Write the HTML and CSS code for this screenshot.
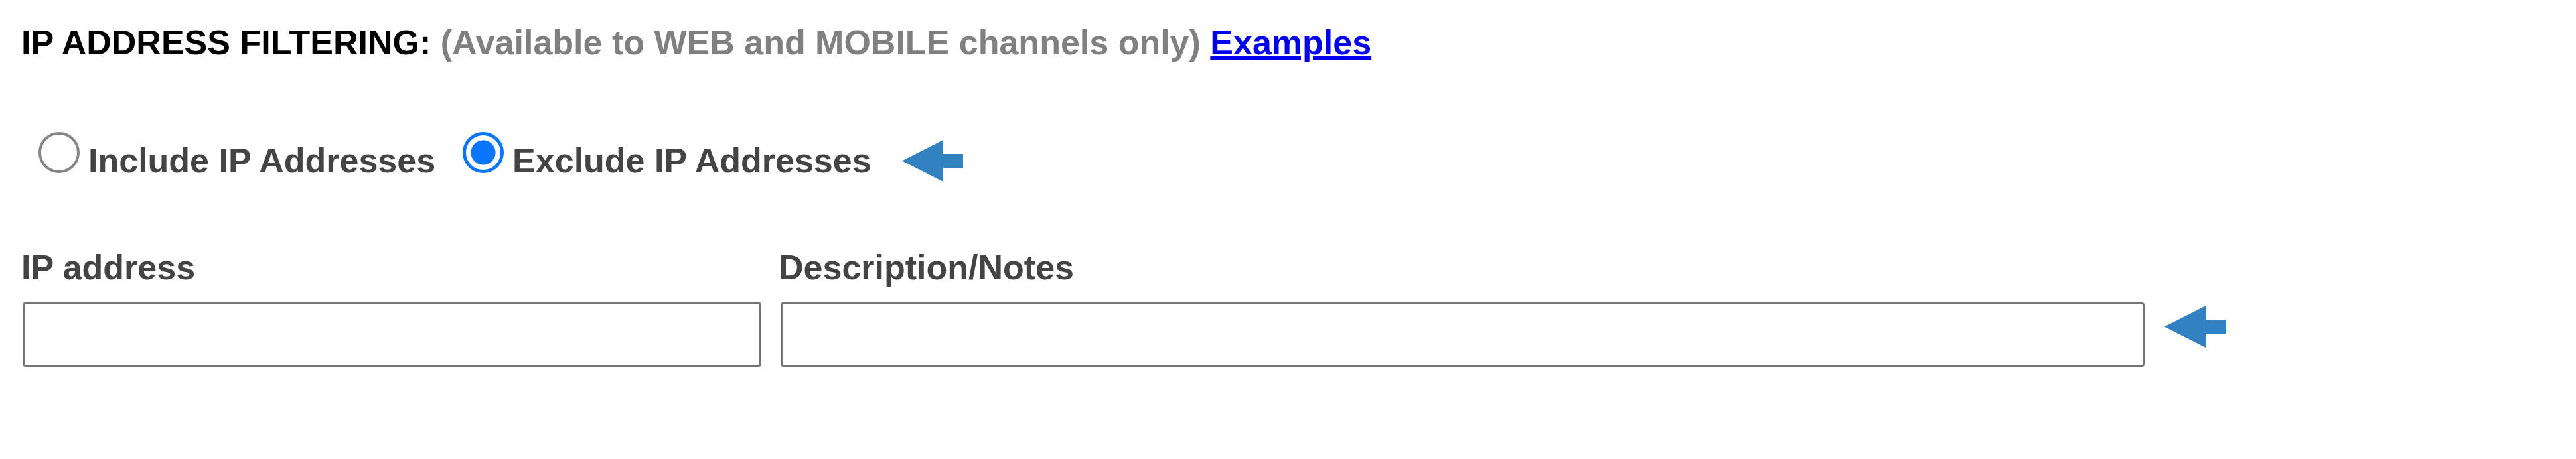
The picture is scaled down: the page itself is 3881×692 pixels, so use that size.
FILE: index.html
```html
<!DOCTYPE html>
<html lang="en">
<head>
<meta charset="utf-8">
<title>IP Address Filtering</title>
<link rel="stylesheet" href="styles.css">
</head>
<body>
<div class="page">
  <p class="title">IP ADDRESS FILTERING: <span class="muted">(Available to WEB and MOBILE channels only)</span> <a class="link" href="#">Examples</a></p>

  <div class="radios">
    <label class="opt opt-include"><input class="radio" type="radio" name="mode"><span class="opt-text">Include IP Addresses</span></label>
    <label class="opt opt-exclude"><input class="radio" type="radio" name="mode" checked><span class="opt-text">Exclude IP Addresses</span></label>
    <svg class="arrow arrow-radio" width="92" height="63" viewBox="0 0 92 63" aria-hidden="true"><polygon points="0,31.5 62,0 62,21 92,21 92,42 62,42 62,63" fill="#3181c3"/></svg>
  </div>

  <div class="fields">
    <div class="field field-ip">
      <label class="field-label" for="ip">IP address</label>
      <input class="text-input input-ip" id="ip" type="text">
    </div>
    <div class="field field-desc">
      <label class="field-label" for="desc">Description/Notes</label>
      <input class="text-input input-desc" id="desc" type="text">
    </div>
    <svg class="arrow arrow-field" width="92" height="63" viewBox="0 0 92 63" aria-hidden="true"><polygon points="0,31.5 62,0 62,21 92,21 92,42 62,42 62,63" fill="#3181c3"/></svg>
  </div>
</div>
</body>
</html>
```

FILE: styles.css
```css
html, body {
  margin: 0;
  padding: 0;
  background: #ffffff;
}

.page {
  padding: 34px 0 0 32px;
  font-family: "Liberation Sans", Arial, sans-serif;
  font-weight: bold;
  font-size: 52px;
  line-height: 60px;
}

.title {
  margin: 0;
  color: #000000;
  white-space: nowrap;
}

.muted {
  color: #808080;
}

.link {
  color: #0000ee;
  text-decoration: underline;
}

.radios {
  display: flex;
  align-items: flex-start;
  margin-top: 105px;
  color: #444444;
}

.opt {
  display: flex;
  align-items: flex-start;
  white-space: nowrap;
}

.opt-include {
  margin-left: 26px;
}

.opt-exclude {
  margin-left: 41px;
}

.radio {
  appearance: none;
  -webkit-appearance: none;
  box-sizing: border-box;
  width: 62px;
  height: 62px;
  margin: 0 13px 0 0;
  border: 4px solid #858585;
  border-radius: 50%;
  background: #ffffff;
}

.radio:checked {
  border: 5px solid #0a75ff;
  background: radial-gradient(circle, #0a75ff 0 18px, #ffffff 19px);
}

.opt-text {
  margin-top: 13px;
}

.arrow {
  display: block;
  flex: none;
}

.arrow-radio {
  margin: 12px 0 0 46px;
}

.fields {
  display: flex;
  align-items: flex-start;
  gap: 26px;
  margin-top: 99px;
  color: #444444;
}

.field {
  display: flex;
  flex-direction: column;
  align-items: flex-start;
}

.field-label {
  white-space: nowrap;
}

.text-input {
  box-sizing: border-box;
  height: 97px;
  margin-top: 23px;
  border: 3px solid #737373;
  border-radius: 4px;
  background: #ffffff;
  padding: 0 8px;
  font: inherit;
  outline: none;
}

.input-ip {
  width: 1113px;
  margin-left: 2px;
}

.input-desc {
  width: 2055px;
  margin-left: 3px;
}

.arrow-field {
  margin: 88px 0 0 4px;
}
```
